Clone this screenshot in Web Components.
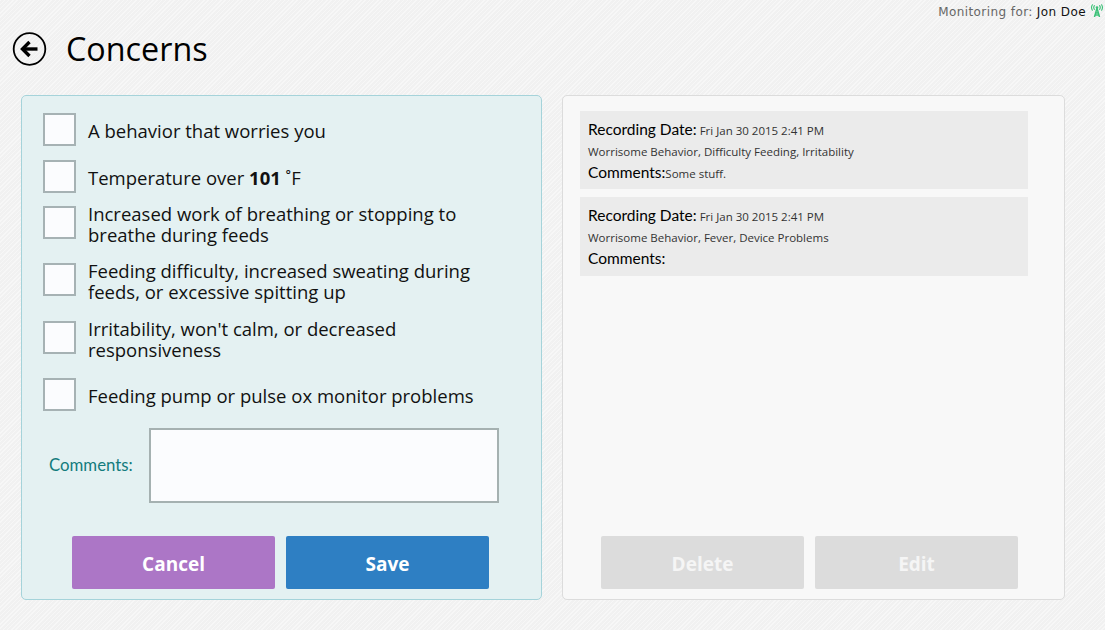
<!DOCTYPE html>
<html>
<head>
<meta charset="utf-8">
<title>Concerns</title>
<style>
    html, body {
        margin: 0;
        height: 100%;
    }
    body {
        width: 1105px;
        height: 630px;
        overflow: hidden;
        font-family: "Open Sans", "Liberation Sans", sans-serif;
        background-color: #f3f3f3;
        background-image: repeating-linear-gradient(135deg, rgba(255,255,255,0.35) 0 1px, rgba(0,0,0,0.006) 1px 3px);
    }
</style>
</head>
<body>
<concerns-page>
    <monitor-status slot="status" name="Jon Doe"></monitor-status>
    <page-title slot="title">Concerns</page-title>

    <panel-box slot="left" tone="blue">
        <concern-form></concern-form>
        <action-button slot="actions" tone="purple">Cancel</action-button>
        <action-button slot="actions" tone="blue">Save</action-button>
    </panel-box>

    <panel-box slot="right">
        <record-card date="Fri Jan 30 2015 2:41 PM" items="Worrisome Behavior, Difficulty Feeding, Irritability" comments="Some stuff."></record-card>
        <record-card date="Fri Jan 30 2015 2:41 PM" items="Worrisome Behavior, Fever, Device Problems" comments=""></record-card>
        <action-button slot="actions" tone="grey">Delete</action-button>
        <action-button slot="actions" tone="grey">Edit</action-button>
    </panel-box>
</concerns-page>

<script>
class ConcernsPage extends HTMLElement {
    constructor() {
        super();
        this.attachShadow({ mode: 'open' });
        this.shadowRoot.innerHTML = `
            <style>
                :host {
                    display: grid;
                    grid-template-columns: 521px 503px;
                    grid-template-rows: 20px 75px 505px;
                    column-gap: 20px;
                    padding-left: 21px;
                }
                .status {
                    grid-column: 1 / 3;
                    margin-right: -40px;
                    display: flex;
                    justify-content: flex-end;
                }
                .title {
                    grid-column: 1 / 3;
                    margin-left: -9px;
                }
            </style>
            <div class="status"><slot name="status"></slot></div>
            <div class="title"><slot name="title"></slot></div>
            <slot name="left"></slot>
            <slot name="right"></slot>
        `;
    }
}
customElements.define('concerns-page', ConcernsPage);

class MonitorStatus extends HTMLElement {
    constructor() {
        super();
        this.attachShadow({ mode: 'open' });
        this.shadowRoot.innerHTML = `
            <style>
                :host {
                    display: flex;
                    align-items: center;
                    height: 20px;
                    padding: 4px 2px 0 0;
                    box-sizing: border-box;
                    font: 12px/16px "DejaVu Sans", sans-serif;
                    letter-spacing: 0.42px;
                    color: #666;
                }
                b {
                    font-weight: 400;
                    color: #111;
                    margin-left: 4px;
                }
                svg {
                    margin: -4px 0 0 5px;
                }
            </style>
            <span>Monitoring for:</span><b></b>
            <svg width="12" height="13" viewBox="0 0 12 13" fill="none" stroke="#3cc178" stroke-width="1.1" stroke-linecap="round">
                <path d="M6 4.2 3.6 12.5M6 4.2l2.4 8.300M4.500 9h3M4 11h4" stroke-width="1.500"/>
                <circle cx="6" cy="3.500" r="1.300" fill="#3cc178" stroke="none"/>
                <path d="M3.400 1.700a3 3 0 0 0 0 3.600M8.600 1.700a3 3 0 0 1 0 3.600M1.400.8a5 5 0 0 0 0 5.400M10.600.8a5 5 0 0 1 0 5.400"/>
            </svg>
        `;
        this.shadowRoot.querySelector('b').textContent = this.getAttribute('name');
    }
}
customElements.define('monitor-status', MonitorStatus);

class PageTitle extends HTMLElement {
    constructor() {
        super();
        this.attachShadow({ mode: 'open' });
        this.shadowRoot.innerHTML = `
            <style>
                :host {
                    display: flex;
                    align-items: center;
                    gap: 18px;
                    height: 58px;
                    color: #000;
                }
                svg {
                    flex: none;
                }
                h1 {
                    margin: -2px 0 0;
                    font-size: 32.300px;
                    font-weight: 400;
                    line-height: 58px;
                }
            </style>
            <svg width="36" height="36" viewBox="0 0 36 36" fill="none" stroke="#000">
                <circle cx="17.500" cy="18" r="15.800" stroke-width="1.800"/>
                <path d="M25.500 18H11" stroke-width="3.400"/>
                <path d="M17.500 11 10.500 18l7 7" stroke-width="3.400"/>
            </svg>
            <h1><slot></slot></h1>
        `;
    }
}
customElements.define('page-title', PageTitle);

class PanelBox extends HTMLElement {
    constructor() {
        super();
        this.attachShadow({ mode: 'open' });
        this.shadowRoot.innerHTML = `
            <style>
                :host {
                    display: flex;
                    flex-direction: column;
                    box-sizing: border-box;
                    height: 505px;
                    border: 1px solid #dcdcdc;
                    border-radius: 5px;
                    background: #f8f8f8;
                    padding: 15px 17px 10px;
                }
                :host([tone="blue"]) {
                    border-color: #a5d3da;
                    background: #e4f1f2;
                    padding: 17px 17px 10px 21px;
                }
                .body {
                    flex: 1;
                    display: flex;
                    flex-direction: column;
                    gap: 8px;
                }
                .actions {
                    display: flex;
                    gap: 11px;
                    padding-left: 21px;
                }
                :host([tone="blue"]) .actions {
                    padding-left: 29px;
                }
            </style>
            <div class="body"><slot></slot></div>
            <div class="actions"><slot name="actions"></slot></div>
        `;
    }
}
customElements.define('panel-box', PanelBox);

class CheckRow extends HTMLElement {
    constructor() {
        super();
        this.attachShadow({ mode: 'open' });
        this.shadowRoot.innerHTML = `
            <style>
                :host {
                    display: flex;
                    align-items: flex-start;
                    gap: 12px;
                    height: 33px;
                }
                .box {
                    flex: none;
                    box-sizing: border-box;
                    width: 33px;
                    height: 33px;
                    border: 2px solid #a6b2b4;
                    background: #fbfcfe;
                }
                .label {
                    display: flex;
                    align-items: center;
                    height: 35px;
                    font-size: 18.500px;
                    line-height: 21px;
                    color: #111;
                }
                span {
                    display: block;
                }
            </style>
            <div class="box"></div>
            <div class="label"><span><slot></slot></span></div>
        `;
    }
}
customElements.define('check-row', CheckRow);

class ConcernForm extends HTMLElement {
    constructor() {
        super();
        this.attachShadow({ mode: 'open' });
        this.shadowRoot.innerHTML = `
            <style>
                :host {
                    display: block;
                }
                .rows {
                    display: grid;
                    grid-template-rows: 47px 46px 57px 58px 57px 33px;
                }
                .comments {
                    display: flex;
                    align-items: center;
                    margin-top: 17px;
                    padding-left: 6px;
                }
                label {
                    width: 100px;
                    margin-top: -2px;
                    font: 16.800px "Lato", sans-serif;
                    color: #137c7d;
                }
                .input {
                    box-sizing: border-box;
                    width: 350px;
                    height: 75px;
                    border: 2px solid #a5b1b1;
                    background: #fbfcfe;
                }
                b {
                    font-weight: 700;
                }
            </style>
            <div class="rows">
                <check-row>A behavior that worries you</check-row>
                <check-row>Temperature over <b>101</b> ˚F</check-row>
                <check-row>Increased work of breathing or stopping to<br>breathe during feeds</check-row>
                <check-row>Feeding difficulty, increased sweating during<br>feeds, or excessive spitting up</check-row>
                <check-row>Irritability, won't calm, or decreased<br>responsiveness</check-row>
                <check-row>Feeding pump or pulse ox monitor problems</check-row>
            </div>
            <div class="comments">
                <label>Comments:</label>
                <div class="input"></div>
            </div>
        `;
    }
}
customElements.define('concern-form', ConcernForm);

class RecordCard extends HTMLElement {
    constructor() {
        super();
        this.attachShadow({ mode: 'open' });
        this.shadowRoot.innerHTML = `
            <style>
                :host {
                    display: block;
                    box-sizing: border-box;
                    width: 448px;
                    height: 78px;
                    padding: 8.500px 8px 0;
                    background: #ebebeb;
                    color: #333;
                    font-size: 11.500px;
                }
                :host(:nth-of-type(2)) {
                    height: 79px;
                }
                div {
                    height: 21.500px;
                    line-height: 21.500px;
                    white-space: nowrap;
                }
                strong {
                    font: 400 15.500px "Lato", sans-serif;
                    color: #000;
                }
            </style>
            <div><strong>Recording Date:</strong> <span class="date"></span></div>
            <div class="items"></div>
            <div><strong>Comments:</strong><span class="comments"></span></div>
        `;
        this.shadowRoot.querySelector('.date').textContent = this.getAttribute('date');
        this.shadowRoot.querySelector('.items').textContent = this.getAttribute('items');
        this.shadowRoot.querySelector('.comments').textContent = this.getAttribute('comments');
    }
}
customElements.define('record-card', RecordCard);

class ActionButton extends HTMLElement {
    constructor() {
        super();
        this.attachShadow({ mode: 'open' });
        this.shadowRoot.innerHTML = `
            <style>
                :host {
                    display: flex;
                    align-items: center;
                    justify-content: center;
                    box-sizing: border-box;
                    width: 203px;
                    height: 53px;
                    padding-top: 2px;
                    border-radius: 2px;
                    font-size: 19px;
                    font-weight: 700;
                    color: #fff;
                }
                :host([tone="purple"]) { background: #ac76c6; }
                :host([tone="blue"]) { background: #2e7fc3; }
                :host([tone="grey"]) { background: #dcdcdc; color: #f5f5f5; }
            </style>
            <slot></slot>
        `;
    }
}
customElements.define('action-button', ActionButton);
</script>
</body>
</html>
